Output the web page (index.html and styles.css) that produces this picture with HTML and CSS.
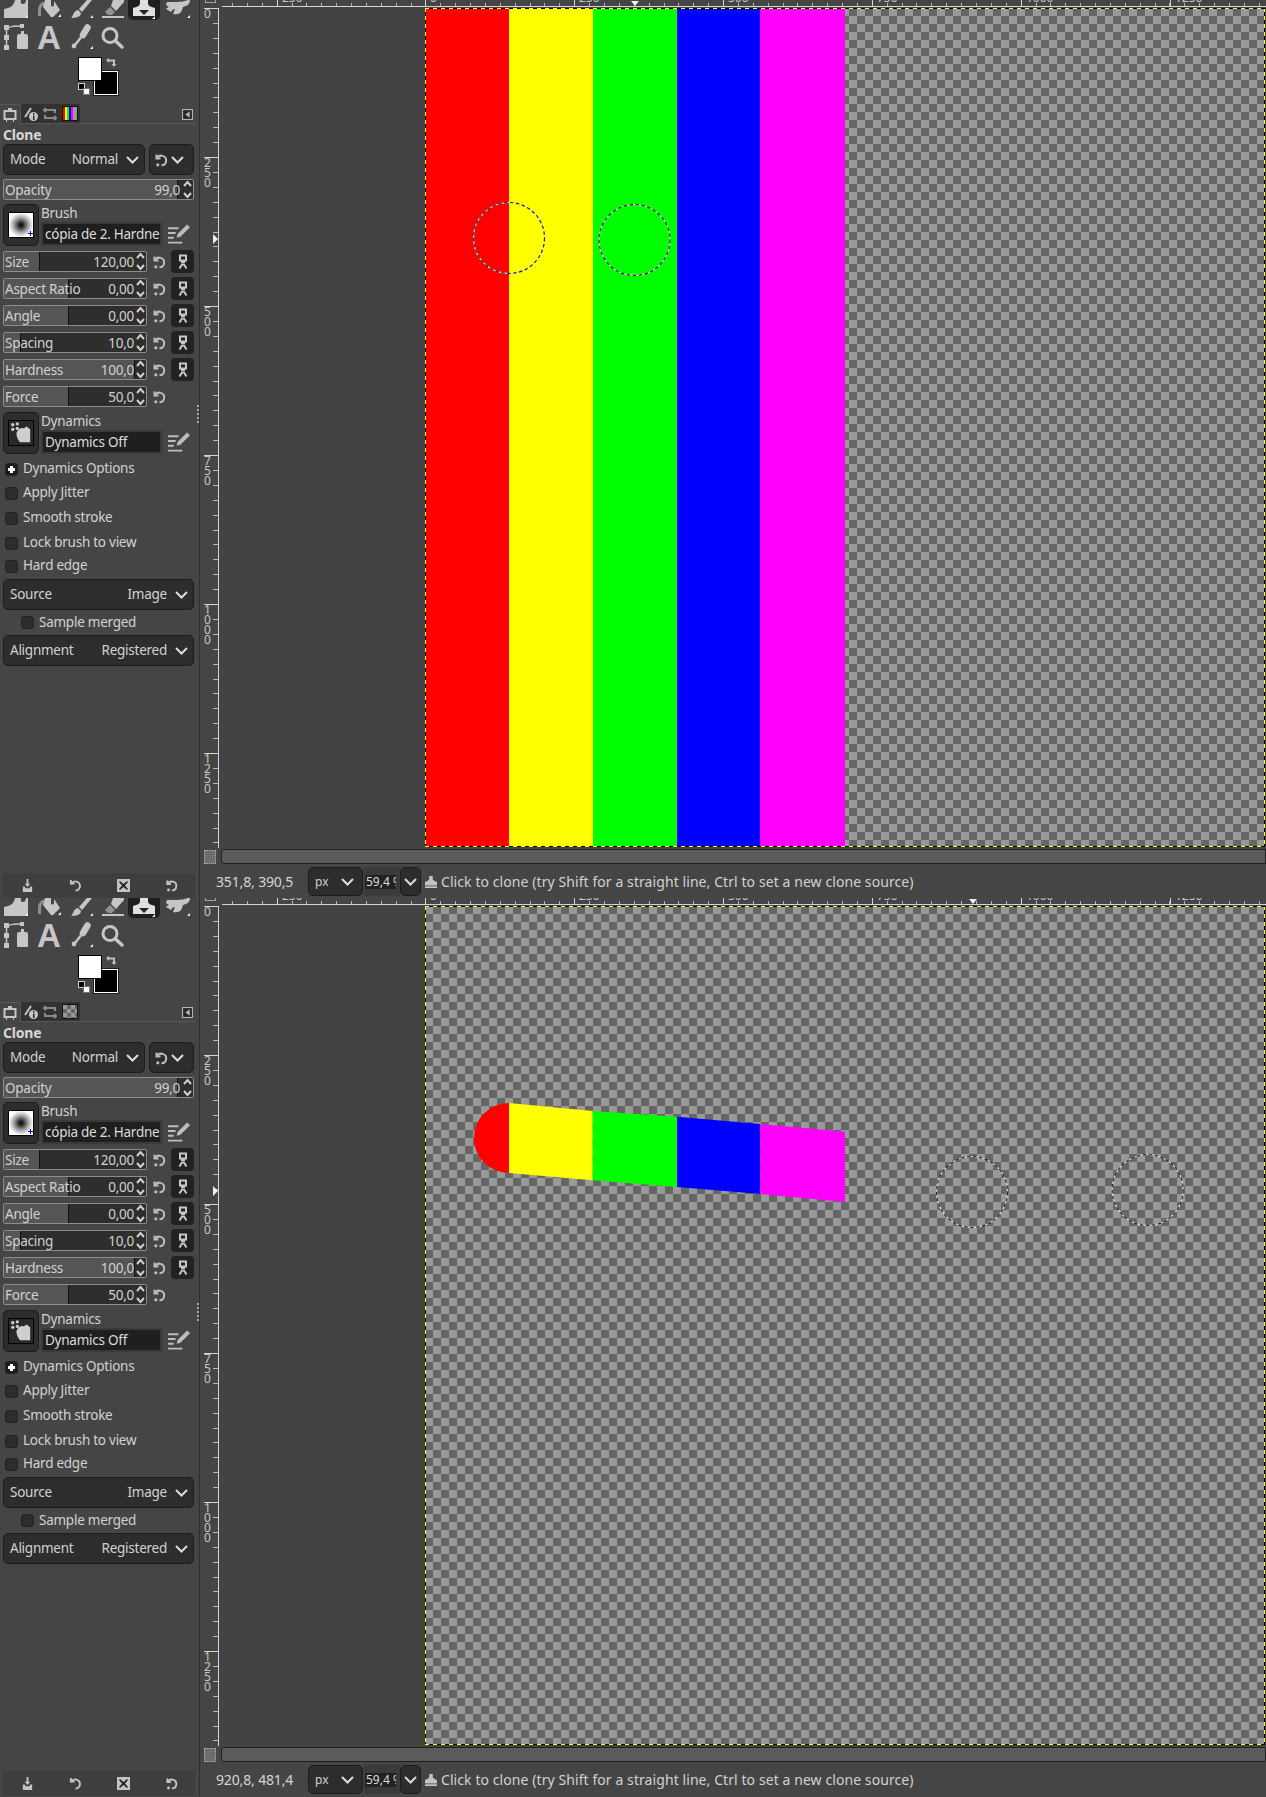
FILE: index.html
```html
<!DOCTYPE html>
<html lang="en">
<head>
<meta charset="utf-8">
<title>GIMP Clone tool</title>
<link rel="stylesheet" href="styles.css">
</head>
<body>
<svg class="defs" aria-hidden="true">
  <symbol id="t-heal" viewBox="0 0 32 20"><path d="M4 18V9c6-1 10-3 11-9h6c-1 2 0 4 2 4s3-2 3-4h2v9 9z"/><path class="tip" d="M25 18h3v-3z"/></symbol>
  <symbol id="t-bucket" viewBox="0 0 32 20"><path class="arc" d="M7.500 16V10c0-3 2-6 5-7"/><path d="M13 0h6v5a1.500 1.500 0 0 0 3 0V1l6 9-7 7h-2L11 7z"/><path class="tip" d="M26 17h3v-3z"/></symbol>
  <symbol id="t-brush" viewBox="0 0 32 20"><path d="M23 0h5L18 12l-3-3z"/><path d="M7 18c2-1 2-7 7-8l3 3c0 4-5 5-10 5z"/><path class="tip" d="M26 18h3v-3z"/></symbol>
  <symbol id="t-eraser" viewBox="0 0 32 20"><path d="M17 0h11v2L20 11l-5-5z"/><path d="M14 7l5 5-3 3h-4l-3-3z" opacity=".6"/><path d="M6 16h22v2H6z"/></symbol>
  <symbol id="t-clone" viewBox="0 0 32 20"><path d="M12 0h8v3c0 3 3 4 7 5v8H5V8c4-1 7-2 7-5z"/><path class="hole" d="M11 10h10l-5 5z"/><path class="tip" d="M24 19h3v-3z"/></symbol>
  <symbol id="t-smudge" viewBox="0 0 32 20"><path d="M7 2h10c4 0 8-1 11-2h2c0 4-3 6-7 7l-1 3c-1 4-5 5-9 4l2-5c-2 0-3 1-4 3L6 9c1-1 2-2 3-2L6 5z"/><path class="tip" d="M27 18h3v-3z"/></symbol>
  <symbol id="t-path" viewBox="0 0 32 32"><path d="M4 3h5v5H4zM4 13h5v5H4zM4 23h5v5H4zM20 2h4v4h-4z"/><path class="line" d="M6.500 6v20M7 7C10 4 14 4 21 4"/><path d="M19 12h2V9h3v3h2a2 2 0 0 1 2 2v12a1 1 0 0 1-1 1h-9a1 1 0 0 1-1-1V14a2 2 0 0 1 2-2z"/></symbol>
  <symbol id="t-picker" viewBox="0 0 32 32"><path class="thin" d="M18 14L11 23"/><path class="bulb" d="M23.500 5.500L19 13"/><circle cx="10" cy="24" r="2.400"/><path class="tip" d="M26 27h3v-3z"/></symbol>
  <symbol id="t-zoom" viewBox="0 0 32 32"><circle class="ring" cx="14" cy="13.500" r="7"/><path class="thick" d="M19.500 19L26 25"/></symbol>
  <symbol id="i-reset" viewBox="0 0 14 14"><path class="line2" d="M2.500 1.500v4h4"/><path class="line2" d="M3 5.500A4.800 4.800 0 1 1 7.500 12.300"/><circle cx="3.800" cy="11.800" r="1.600"/></symbol>
  <symbol id="i-link" viewBox="0 0 10 16"><path class="line2" d="M2 1.500h6v5H2zM4 7v2M6 7v2M1.500 14.500l2.500-4h2l2.500 4"/></symbol>
  <symbol id="i-edit" viewBox="0 0 23 22"><path d="M0 4h11v2H0zM0 9h8v2H0zM0 14h6v2H0zM0 19h15v2H0z"/><path d="M9 15l1-4L20 1l3 3L13 14z"/></symbol>
  <symbol id="i-spin" viewBox="0 0 9 19"><path class="line2" d="M1 6l3.500-4L8 6M1 13l3.500 4L8 13"/></symbol>
  <symbol id="i-chev" viewBox="0 0 13 8"><path class="line2" d="M1 1l5.500 5.500L12 1"/></symbol>
  <symbol id="i-monitor" viewBox="0 0 14 14"><path class="line2" d="M1.500 3h11v8h-11zM5 1h4M3 13h1M10 13h1"/></symbol>
  <symbol id="i-info" viewBox="0 0 14 14"><path class="line2" d="M1 10L7 1"/><circle cx="9.500" cy="9.500" r="4.500"/><path class="hole" d="M9 6h1.500v1.500H9zM9 8.500h1.500V13H9z"/></symbol>
  <symbol id="i-undoredo" viewBox="0 0 14 14"><path class="line2" d="M3 1L1 3l2 2M1 3h11v3M11 9l2 2-2 2M13 11H2V8"/></symbol>
  <symbol id="i-menu" viewBox="0 0 10 10"><path d="M0 0h10v10H0z"/><path class="hole" d="M1 1h8v8H1z"/><path d="M7 2v6L3 5z"/></symbol>
  <symbol id="i-save" viewBox="0 0 12 14"><path d="M5 0h2v5h2L6 8.500 3 5h2zM1 8h2l1 2h4l1-2h2v6H1z"/></symbol>
  <symbol id="i-restore" viewBox="0 0 14 14"><path class="line2" d="M2 1v4h4"/><path class="line2" d="M2.500 5A5 5 0 1 1 7 12.500"/></symbol>
  <symbol id="i-delete" viewBox="0 0 13 13"><path d="M0 0h13v13H0z"/><path class="hole" d="M3 2l3.500 3L10 2l1 1-3 3.500 3 3.500-1 1-3.500-3L3 11l-1-1 3-3.500L2 3z"/></symbol>
  <symbol id="i-dyn" viewBox="0 0 24 24"><circle cx="3" cy="3" r="1.800"/><circle cx="8" cy="2" r="1.800"/><circle cx="3" cy="8" r="1.800"/><circle cx="8" cy="7" r="1.800"/><path d="M7 12c2-5 6-6 8-5l3-2 4 3v14H11c-3-3-4-7-4-10z"/></symbol>
  <symbol id="i-stamp" viewBox="0 0 14 14"><path d="M5 0h4v3c0 2 2 3 5 4v4H0V7c3-1 5-2 5-4z"/><path d="M0 12h14v2H0z"/></symbol>
</svg>

<section class="window">
  <aside class="side">
    <div class="tools">
      <div class="toolrow first">
        <svg class="tool"><use href="#t-heal"/></svg>
        <svg class="tool"><use href="#t-bucket"/></svg>
        <svg class="tool"><use href="#t-brush"/></svg>
        <svg class="tool"><use href="#t-eraser"/></svg>
        <svg class="tool active"><use href="#t-clone"/></svg>
        <svg class="tool"><use href="#t-smudge"/></svg>
      </div>
      <div class="toolrow second">
        <svg class="tool tall"><use href="#t-path"/></svg>
        <span class="tool tall texttool">A</span>
        <svg class="tool tall"><use href="#t-picker"/></svg>
        <svg class="tool tall"><use href="#t-zoom"/></svg>
      </div>
      <div class="colors">
        <span class="bg"></span><span class="fg"></span>
        <span class="mini-b"></span><span class="mini-w"></span>
        <svg class="swap" viewBox="0 0 12 12"><path d="M0 2l3-2v1.500h6V6h1.500L8 9 5.500 6H7V3.500H3V5z"/></svg>
      </div>
    </div>
    <div class="tabs">
      <span class="tab on"><svg class="tabicon"><use href="#i-monitor"/></svg></span>
      <span class="tab"><svg class="tabicon"><use href="#i-info"/></svg></span>
      <span class="tab"><svg class="tabicon dim"><use href="#i-undoredo"/></svg></span>
      <span class="tab"><span class="thumb rainbow"></span></span>
      <svg class="panelmenu"><use href="#i-menu"/></svg>
    </div>
    <div class="panel">
      <h2 class="title">Clone</h2>
      <div class="comborow">
        <div class="combo grow"><span>Mode</span><span class="val">Normal</span><svg class="chev"><use href="#i-chev"/></svg></div>
        <div class="combo small"><svg class="rs"><use href="#i-reset"/></svg><svg class="chev"><use href="#i-chev"/></svg></div>
      </div>
      <div class="spin full opacity"><i class="fill" style="width:92%"></i><span class="lbl">Opacity</span><span class="num">99,0</span><svg class="arrows"><use href="#i-spin"/></svg></div>
      <div class="asset">
        <div class="thumbbtn"><span class="brushprev"></span></div>
        <div class="assetmain"><span class="assetlabel">Brush</span><div class="assetrow"><div class="entry">cópia de 2. Hardness 100</div><svg class="edit"><use href="#i-edit"/></svg></div></div>
      </div>
      <div class="row first-spin"><div class="spin"><i class="fill" style="width:25%"></i><span class="lbl">Size</span><span class="num">120,00</span><svg class="arrows"><use href="#i-spin"/></svg></div><svg class="rs"><use href="#i-reset"/></svg><span class="linkbtn"><svg class="lk"><use href="#i-link"/></svg></span></div>
      <div class="row"><div class="spin"><i class="fill" style="width:46%"></i><span class="lbl">Aspect Ratio</span><span class="num">0,00</span><svg class="arrows"><use href="#i-spin"/></svg></div><svg class="rs"><use href="#i-reset"/></svg><span class="linkbtn"><svg class="lk"><use href="#i-link"/></svg></span></div>
      <div class="row"><div class="spin"><i class="fill" style="width:46%"></i><span class="lbl">Angle</span><span class="num">0,00</span><svg class="arrows"><use href="#i-spin"/></svg></div><svg class="rs"><use href="#i-reset"/></svg><span class="linkbtn"><svg class="lk"><use href="#i-link"/></svg></span></div>
      <div class="row"><div class="spin"><i class="fill" style="width:12%"></i><span class="lbl">Spacing</span><span class="num">10,0</span><svg class="arrows"><use href="#i-spin"/></svg></div><svg class="rs"><use href="#i-reset"/></svg><span class="linkbtn"><svg class="lk"><use href="#i-link"/></svg></span></div>
      <div class="row"><div class="spin"><i class="fill" style="width:92%"></i><span class="lbl">Hardness</span><span class="num">100,0</span><svg class="arrows"><use href="#i-spin"/></svg></div><svg class="rs"><use href="#i-reset"/></svg><span class="linkbtn"><svg class="lk"><use href="#i-link"/></svg></span></div>
      <div class="row"><div class="spin"><i class="fill" style="width:46%"></i><span class="lbl">Force</span><span class="num">50,0</span><svg class="arrows"><use href="#i-spin"/></svg></div><svg class="rs"><use href="#i-reset"/></svg></div>
      <div class="asset dyn">
        <div class="thumbbtn"><span class="dynprev"><svg class="dynicon"><use href="#i-dyn"/></svg></span></div>
        <div class="assetmain"><span class="assetlabel">Dynamics</span><div class="assetrow"><div class="entry">Dynamics Off</div><svg class="edit"><use href="#i-edit"/></svg></div></div>
      </div>
      <ul class="checks">
        <li><span class="box plus"></span>Dynamics Options</li>
        <li><span class="box"></span>Apply Jitter</li>
        <li class="roomy"><span class="box"></span>Smooth stroke</li>
        <li><span class="box"></span>Lock brush to view</li>
        <li class="tight"><span class="box"></span>Hard edge</li>
      </ul>
      <div class="combo wide"><span>Source</span><span class="val">Image</span><svg class="chev"><use href="#i-chev"/></svg></div>
      <div class="sample"><span class="box"></span>Sample merged</div>
      <div class="combo wide"><span>Alignment</span><span class="val">Registered</span><svg class="chev"><use href="#i-chev"/></svg></div>
    </div>
    <div class="actions">
      <svg class="act save"><use href="#i-save"/></svg>
      <svg class="act"><use href="#i-restore"/></svg>
      <svg class="act"><use href="#i-delete"/></svg>
      <svg class="act"><use href="#i-reset"/></svg>
    </div>
    <span class="grip"></span>
  </aside>
  <main class="view">
    <div class="hruler">
      <span class="corner"></span>
      <div class="hticks"></div>
      <span class="hmark" style="left:77px"><b>250</b></span>
      <span class="hmark" style="left:225px"><b>0</b></span>
      <span class="hmark" style="left:374px"><b>250</b></span>
      <span class="hmark" style="left:523px"><b>500</b></span>
      <span class="hmark" style="left:672px"><b>750</b></span>
      <span class="hmark" style="left:821px"><b>1000</b></span>
      <span class="hmark" style="left:970px"><b>1250</b></span>
      <span class="pointer" style="left:431px"></span>
    </div>
    <div class="middle">
      <div class="vruler">
        <span class="vmark" style="top:0"><b>0</b></span>
        <span class="vmark" style="top:149px"><b>250</b></span>
        <span class="vmark" style="top:298px"><b>500</b></span>
        <span class="vmark" style="top:447px"><b>750</b></span>
        <span class="vmark" style="top:596px"><b>1000</b></span>
        <span class="vmark" style="top:745px"><b>1250</b></span>
        <span class="vpointer" style="top:226px"></span>
      </div>
      <div class="canvas">
        <div class="image">
          <div class="strips">
            <span class="s red"></span><span class="s yellow"></span><span class="s green"></span><span class="s blue"></span><span class="s magenta"></span>
          </div>
          <svg class="overlay" viewBox="0 0 840 839">
            <circle class="ant w" cx="84" cy="230" r="35.500"/><circle class="ant k" cx="84" cy="230" r="35.500"/>
            <circle class="ant w" cx="209.500" cy="232" r="35.500"/><circle class="ant k" cx="209.500" cy="232" r="35.500"/>
          </svg>
        </div>
      </div>
    </div>
    <div class="scrollrow"><span class="scorner"></span><span class="scrollbar"></span></div>
    <div class="status">
      <span class="coords">351,8, 390,5</span>
      <div class="unit"><span>px</span><svg class="chev"><use href="#i-chev"/></svg></div>
      <div class="zoomwrap"><span class="zoomentry">59,4 %</span></div>
      <div class="zoomarrow"><svg class="chev"><use href="#i-chev"/></svg></div>
      <svg class="stamp"><use href="#i-stamp"/></svg>
      <span class="msg">Click to clone (try Shift for a straight line, Ctrl to set a new clone source)</span>
    </div>
  </main>
</section>

<section class="window">
  <aside class="side">
    <div class="tools">
      <div class="toolrow first">
        <svg class="tool"><use href="#t-heal"/></svg>
        <svg class="tool"><use href="#t-bucket"/></svg>
        <svg class="tool"><use href="#t-brush"/></svg>
        <svg class="tool"><use href="#t-eraser"/></svg>
        <svg class="tool active"><use href="#t-clone"/></svg>
        <svg class="tool"><use href="#t-smudge"/></svg>
      </div>
      <div class="toolrow second">
        <svg class="tool tall"><use href="#t-path"/></svg>
        <span class="tool tall texttool">A</span>
        <svg class="tool tall"><use href="#t-picker"/></svg>
        <svg class="tool tall"><use href="#t-zoom"/></svg>
      </div>
      <div class="colors">
        <span class="bg"></span><span class="fg"></span>
        <span class="mini-b"></span><span class="mini-w"></span>
        <svg class="swap" viewBox="0 0 12 12"><path d="M0 2l3-2v1.500h6V6h1.500L8 9 5.500 6H7V3.500H3V5z"/></svg>
      </div>
    </div>
    <div class="tabs">
      <span class="tab on"><svg class="tabicon"><use href="#i-monitor"/></svg></span>
      <span class="tab"><svg class="tabicon"><use href="#i-info"/></svg></span>
      <span class="tab"><svg class="tabicon dim"><use href="#i-undoredo"/></svg></span>
      <span class="tab"><span class="thumb checker"></span></span>
      <svg class="panelmenu"><use href="#i-menu"/></svg>
    </div>
    <div class="panel">
      <h2 class="title">Clone</h2>
      <div class="comborow">
        <div class="combo grow"><span>Mode</span><span class="val">Normal</span><svg class="chev"><use href="#i-chev"/></svg></div>
        <div class="combo small"><svg class="rs"><use href="#i-reset"/></svg><svg class="chev"><use href="#i-chev"/></svg></div>
      </div>
      <div class="spin full opacity"><i class="fill" style="width:92%"></i><span class="lbl">Opacity</span><span class="num">99,0</span><svg class="arrows"><use href="#i-spin"/></svg></div>
      <div class="asset">
        <div class="thumbbtn"><span class="brushprev"></span></div>
        <div class="assetmain"><span class="assetlabel">Brush</span><div class="assetrow"><div class="entry">cópia de 2. Hardness 100</div><svg class="edit"><use href="#i-edit"/></svg></div></div>
      </div>
      <div class="row first-spin"><div class="spin"><i class="fill" style="width:25%"></i><span class="lbl">Size</span><span class="num">120,00</span><svg class="arrows"><use href="#i-spin"/></svg></div><svg class="rs"><use href="#i-reset"/></svg><span class="linkbtn"><svg class="lk"><use href="#i-link"/></svg></span></div>
      <div class="row"><div class="spin"><i class="fill" style="width:46%"></i><span class="lbl">Aspect Ratio</span><span class="num">0,00</span><svg class="arrows"><use href="#i-spin"/></svg></div><svg class="rs"><use href="#i-reset"/></svg><span class="linkbtn"><svg class="lk"><use href="#i-link"/></svg></span></div>
      <div class="row"><div class="spin"><i class="fill" style="width:46%"></i><span class="lbl">Angle</span><span class="num">0,00</span><svg class="arrows"><use href="#i-spin"/></svg></div><svg class="rs"><use href="#i-reset"/></svg><span class="linkbtn"><svg class="lk"><use href="#i-link"/></svg></span></div>
      <div class="row"><div class="spin"><i class="fill" style="width:12%"></i><span class="lbl">Spacing</span><span class="num">10,0</span><svg class="arrows"><use href="#i-spin"/></svg></div><svg class="rs"><use href="#i-reset"/></svg><span class="linkbtn"><svg class="lk"><use href="#i-link"/></svg></span></div>
      <div class="row"><div class="spin"><i class="fill" style="width:92%"></i><span class="lbl">Hardness</span><span class="num">100,0</span><svg class="arrows"><use href="#i-spin"/></svg></div><svg class="rs"><use href="#i-reset"/></svg><span class="linkbtn"><svg class="lk"><use href="#i-link"/></svg></span></div>
      <div class="row"><div class="spin"><i class="fill" style="width:46%"></i><span class="lbl">Force</span><span class="num">50,0</span><svg class="arrows"><use href="#i-spin"/></svg></div><svg class="rs"><use href="#i-reset"/></svg></div>
      <div class="asset dyn">
        <div class="thumbbtn"><span class="dynprev"><svg class="dynicon"><use href="#i-dyn"/></svg></span></div>
        <div class="assetmain"><span class="assetlabel">Dynamics</span><div class="assetrow"><div class="entry">Dynamics Off</div><svg class="edit"><use href="#i-edit"/></svg></div></div>
      </div>
      <ul class="checks">
        <li><span class="box plus"></span>Dynamics Options</li>
        <li><span class="box"></span>Apply Jitter</li>
        <li class="roomy"><span class="box"></span>Smooth stroke</li>
        <li><span class="box"></span>Lock brush to view</li>
        <li class="tight"><span class="box"></span>Hard edge</li>
      </ul>
      <div class="combo wide"><span>Source</span><span class="val">Image</span><svg class="chev"><use href="#i-chev"/></svg></div>
      <div class="sample"><span class="box"></span>Sample merged</div>
      <div class="combo wide"><span>Alignment</span><span class="val">Registered</span><svg class="chev"><use href="#i-chev"/></svg></div>
    </div>
    <div class="actions">
      <svg class="act save"><use href="#i-save"/></svg>
      <svg class="act"><use href="#i-restore"/></svg>
      <svg class="act"><use href="#i-delete"/></svg>
      <svg class="act"><use href="#i-reset"/></svg>
    </div>
    <span class="grip"></span>
  </aside>
  <main class="view">
    <div class="hruler">
      <span class="corner"></span>
      <div class="hticks"></div>
      <span class="hmark" style="left:77px"><b>250</b></span>
      <span class="hmark" style="left:225px"><b>0</b></span>
      <span class="hmark" style="left:374px"><b>250</b></span>
      <span class="hmark" style="left:523px"><b>500</b></span>
      <span class="hmark" style="left:672px"><b>750</b></span>
      <span class="hmark" style="left:821px"><b>1000</b></span>
      <span class="hmark" style="left:970px"><b>1250</b></span>
      <span class="pointer" style="left:769px"></span>
    </div>
    <div class="middle">
      <div class="vruler">
        <span class="vmark" style="top:0"><b>0</b></span>
        <span class="vmark" style="top:149px"><b>250</b></span>
        <span class="vmark" style="top:298px"><b>500</b></span>
        <span class="vmark" style="top:447px"><b>750</b></span>
        <span class="vmark" style="top:596px"><b>1000</b></span>
        <span class="vmark" style="top:745px"><b>1250</b></span>
        <span class="vpointer" style="top:280px"></span>
      </div>
      <div class="canvas">
        <div class="image">
          <svg class="overlay" viewBox="0 0 840 839">
            <path class="red-f" d="M84 197A35 35 0 0 0 84 267z"/>
            <path class="yel-f" d="M84 197L167.700 205V274.300L84 267z"/>
            <path class="grn-f" d="M167.700 205L252 210.700V281L167.700 274.300z"/>
            <path class="blu-f" d="M252 210.700L335.300 218V288L252 281z"/>
            <path class="mag-f" d="M335.300 218L420 225.700V296L335.300 288z"/>
            <circle class="ant w" cx="547" cy="286" r="35.500"/><circle class="ant k" cx="547" cy="286" r="35.500"/>
            <circle class="ant w" cx="722.700" cy="284" r="35.500"/><circle class="ant k" cx="722.700" cy="284" r="35.500"/>
          </svg>
        </div>
      </div>
    </div>
    <div class="scrollrow"><span class="scorner"></span><span class="scrollbar"></span></div>
    <div class="status">
      <span class="coords">920,8, 481,4</span>
      <div class="unit"><span>px</span><svg class="chev"><use href="#i-chev"/></svg></div>
      <div class="zoomwrap"><span class="zoomentry">59,4 %</span></div>
      <div class="zoomarrow"><svg class="chev"><use href="#i-chev"/></svg></div>
      <svg class="stamp"><use href="#i-stamp"/></svg>
      <span class="msg">Click to clone (try Shift for a straight line, Ctrl to set a new clone source)</span>
    </div>
  </main>
</section>
</body>
</html>
```
FILE: styles.css
```css
* { box-sizing: border-box; }
html, body { margin: 0; padding: 0; }
body {
  background: #454545;
  color: #d2d2d2;
  font-family: "Noto Sans", "Open Sans", sans-serif;
  font-size: 14px;
  line-height: 1;
  overflow: hidden;
}
.defs { position: absolute; width: 0; height: 0; }
.tip { fill: #eee; }
.hole { fill: #262626; }
.line { fill: none; stroke: currentColor; stroke-width: 1.5; }
.line2 { fill: none; stroke: currentColor; stroke-width: 2; }
.thick { fill: none; stroke: currentColor; stroke-width: 3.500; stroke-linecap: round; }
.thin { fill: none; stroke: #c6c6c6; stroke-width: 2.500; }
.bulb { fill: none; stroke: #c6c6c6; stroke-width: 6.500; stroke-linecap: round; }
.arc { fill: none; stroke: #8e8e8e; stroke-width: 3; }
.ring { fill: none; stroke: currentColor; stroke-width: 3; }

.window { display: flex; height: 898px; width: 1266px; overflow: hidden; }

/* sidebar */
.side { position: relative; width: 200px; flex: none; display: flex; flex-direction: column; border-right: 1px solid #2f2f2f; background: #454545; font-size: 13.500px; letter-spacing: -0.250px; }
.tools { height: 104px; flex: none; }
.toolrow { display: flex; }
.toolrow.first { height: 22px; }
.toolrow.second { height: 32px; }
.tool { display: block; width: 32px; height: 20px; fill: #c6c6c6; color: #c6c6c6; flex: none; }
.tool.tall { height: 32px; }
.tool.active { background: #1f1f1f; border-radius: 0 0 5px 5px; fill: #e0e0e0; }
.texttool { font-family: "Liberation Sans", sans-serif; font-weight: 700; font-size: 33px; letter-spacing: 0; line-height: 32px; text-align: center; padding: 0 5px; }

.colors { position: relative; height: 50px; }
.fg, .bg { position: absolute; display: block; }
.fg { left: 78px; top: 3px; width: 24px; height: 24px; background: #fff; border: 1px solid #000; }
.bg { left: 94px; top: 17px; width: 24px; height: 24px; background: #000; border: 1px solid #fff; outline: 1px solid #1c1c1c; }
.mini-b, .mini-w { position: absolute; display: block; width: 7px; height: 7px; }
.mini-b { left: 78px; top: 29px; background: #000; border: 1px solid #ccc; }
.mini-w { left: 83px; top: 34px; background: #fff; border: 1px solid #777; }
.swap { position: absolute; left: 106px; top: 4px; width: 12px; height: 12px; fill: #bdbdbd; }

.tabs { position: relative; height: 20px; flex: none; display: flex; }
.tab { width: 19.500px; height: 20px; background: #323232; display: flex; align-items: center; justify-content: center; border-bottom: 1px solid #565656; }
.tab.on { width: 21px; background: #454545; border: 1px solid #565656; border-bottom: 0; border-left: 0; }
.tabicon { width: 14px; height: 14px; color: #c6c6c6; fill: #c6c6c6; }
.tabicon.dim { color: #8a8a8a; fill: #8a8a8a; }
.thumb { display: block; width: 16px; height: 15px; border: 1px solid #111; }
.thumb.rainbow { background: linear-gradient(90deg, #f00 0 15%, #ff0 15% 30%, #0f0 30% 45%, #00f 45% 58%, #f0f 58% 70%, #999 70%); }
.thumb.checker { background: repeating-conic-gradient(#666 0 25%, #999 0 50%) 0 0 / 8px 8px; }
.panelmenu { position: absolute; left: 182px; top: 5px; width: 11px; height: 11px; fill: #b4b4b4; }
.tabs::after { content: ""; flex: 1; margin-right: 3px; border-bottom: 1px solid #565656; }

.panel { height: 749px; flex: none; margin-left: 3px; width: 192px; }
.title { margin: 0; height: 20px; font-size: 14px; font-weight: 700; letter-spacing: -0.200px; color: #d8d8d8; line-height: 22px; }

.combo { display: flex; align-items: center; height: 31px; background: #2d2d2d; border: 1px solid #1c1c1c; border-radius: 5px; padding: 0 5px 0 6px; }
.combo .val { margin-left: auto; }
.comborow { display: flex; gap: 4px; }
.combo.grow { width: 142px; }
.combo.small { width: 45px; padding: 0 6px 0 4px; justify-content: space-between; }
.combo.wide { width: 191px; }
.chev { width: 13px; height: 8px; color: #dcdcdc; margin-left: 8px; flex: none; }
.rs { width: 14px; height: 14px; color: #bdbdbd; fill: #bdbdbd; flex: none; }
.combo.small .chev { margin: 0 3px 0 0; }

.spin { position: relative; width: 144px; height: 21px; background: #2e2e2e; border: 1px solid #8d8d8d; border-radius: 2px; overflow: hidden; flex: none; }
.spin.full { width: 191px; margin-top: 4px; }
.fill { position: absolute; left: 0; top: 0; bottom: 0; background: #555; border-right: 1px solid #101010; }
.lbl { position: absolute; left: 1px; top: 2px; line-height: 16px; white-space: nowrap; }
.num { position: absolute; right: 12px; top: 2px; line-height: 16px; }
.spin.opacity .num { right: 13px; }
.arrows { position: absolute; right: 1px; top: 0; width: 9px; height: 19px; color: #d0d0d0; }

.asset { display: flex; height: 42px; margin-top: 4px; gap: 2px; }
.asset.dyn { margin-top: 5px; }
.thumbbtn { width: 36px; height: 42px; background: #2d2d2d; border: 1px solid #1c1c1c; border-radius: 5px; flex: none; display: flex; align-items: center; justify-content: center; }
.brushprev { position: relative; display: block; width: 26px; height: 26px; background: radial-gradient(circle, #000 0, #333 15%, #aaa 45%, #fff 72%); border: 1px solid #000; }
.brushprev::after { content: ""; position: absolute; right: 0; bottom: 1px; width: 5px; height: 5px; background: linear-gradient(#00f, #00f) center / 5px 1px no-repeat, linear-gradient(#00f, #00f) center / 1px 5px no-repeat; }
.dynprev { display: block; width: 26px; height: 26px; background: #2a2a2a; border: 1px solid #000; padding: 1px; }
.dynicon { display: block; width: 22px; height: 22px; fill: #cfcfcf; }
.assetmain { flex: 1; min-width: 0; }
.assetlabel { display: block; height: 18px; line-height: 18px; }
.assetrow { display: flex; align-items: center; }
.entry { width: 121px; height: 24px; background: #1f1f1f; border: 2px solid #3a3a3a; color: #dcdcdc; padding-left: 2px; line-height: 20px; white-space: nowrap; overflow: hidden; flex: none; }
.edit { width: 22px; height: 22px; margin-left: 6px; fill: #bdbdbd; flex: none; }

.row { display: flex; align-items: center; height: 21px; margin-top: 6px; }
.row.first-spin { margin-top: 5px; }
.row .rs { margin-left: 5px; }
.linkbtn { width: 23px; height: 23px; margin-left: 5px; background: #222; border-radius: 4px; display: flex; align-items: center; justify-content: center; flex: none; }
.lk { width: 10px; height: 16px; color: #c8c8c8; }

.checks { list-style: none; margin: 3px 0 2px; padding: 0; }
.checks li { display: flex; align-items: center; height: 24px; padding-left: 2px; gap: 5px; }
.checks li.roomy { height: 26px; }
.checks li.tight { height: 22px; }
.box { display: block; width: 13px; height: 13px; background: #2d2d2d; border: 1px solid #222; border-radius: 3px; flex: none; }
.box.plus { background: linear-gradient(#fff, #fff) center / 7px 3px no-repeat, linear-gradient(#fff, #fff) center / 3px 7px no-repeat, #1d1d1d; }
.sample { display: flex; align-items: center; height: 25px; padding-left: 18px; gap: 5px; }

.actions { height: 25px; flex: none; width: 192px; margin-left: 3px; background: #3e3e3e; display: grid; grid-template-columns: repeat(4, 48px); align-items: center; justify-items: center; }
.act { width: 13px; height: 13px; color: #c4c4c4; fill: #c4c4c4; }
.grip { position: absolute; left: 197px; top: 405px; width: 2px; height: 18px; background: repeating-linear-gradient(#aaa 0 2px, transparent 2px 4px); }

/* canvas side */
.view { flex: 1; min-width: 0; display: flex; flex-direction: column; }
.hruler { position: relative; height: 8px; overflow: hidden; flex: none; }
.corner { position: absolute; left: 5px; top: -6px; width: 11px; height: 9px; border: 1px solid #a8a8a8; }
.hticks { position: absolute; left: 22px; right: 0; top: 0; height: 7px; border-bottom: 1px solid #d4d4d4; background: repeating-linear-gradient(90deg, #b8b8b8 10px, #b8b8b8 11px, transparent 11px, transparent 24.880px) 0 3px / 100% 3px no-repeat; }
.hmark { position: absolute; top: 0; height: 7px; border-left: 1px solid #d4d4d4; }
.hmark b { position: absolute; left: 4px; top: -8px; font-weight: 400; font-size: 12px; line-height: 12px; color: #c8c8c8; }
.pointer { position: absolute; top: 1px; width: 0; height: 0; border: 4px solid transparent; border-bottom: 0; border-top: 5px solid #eee; }

.middle { display: flex; height: 840px; flex: none; }
.vruler { position: relative; width: 19px; flex: none; overflow: hidden; border-right: 1px solid #d4d4d4; background: repeating-linear-gradient(#b8b8b8 0, #b8b8b8 1px, transparent 1px, transparent 14.900px) right 0 top 0 / 5px 100% no-repeat; }
.vmark { position: absolute; left: 4px; right: 0; height: 1px; border-top: 1px solid #d4d4d4; }
.vmark b { position: absolute; left: 0; top: 0; width: 1ch; word-break: break-all; font-weight: 400; font-size: 12px; line-height: 10px; letter-spacing: 0; color: #c8c8c8; }
.vpointer { position: absolute; right: 0; width: 0; height: 0; border: 5px solid transparent; border-right: 0; border-left: 5px solid #eee; }

.canvas { flex: 1; min-width: 0; padding-left: 206px; background: #434343; overflow: hidden; }
.image { position: relative; width: 840px; height: 839px; background: repeating-conic-gradient(#666 0 25%, #999 0 50%) 0 0 / 16px 16px; }
.image::after { content: ""; position: absolute; inset: 0; background:
  repeating-linear-gradient(90deg, #ff0 0 4px, #000 4px 8px) 0 0 / 100% 1px no-repeat,
  repeating-linear-gradient(90deg, #ff0 0 4px, #000 4px 8px) 0 100% / 100% 1px no-repeat,
  repeating-linear-gradient(#ff0 0 4px, #000 4px 8px) 0 0 / 1px 100% no-repeat,
  repeating-linear-gradient(#ff0 0 4px, #000 4px 8px) 100% 0 / 1px 100% no-repeat; }
.strips { display: flex; height: 100%; width: 420px; }
.s { display: block; height: 100%; flex: none; }
.red { width: 84px; background: #f00; }
.yellow { width: 83.500px; background: #ff0; }
.green { width: 84.500px; background: #0f0; }
.blue { width: 83px; background: #00f; }
.magenta { width: 85px; background: #f0f; }
.overlay { position: absolute; left: 0; top: 0; width: 840px; height: 839px; }
.red-f { fill: #f00; } .yel-f { fill: #ff0; } .grn-f { fill: #0f0; } .blu-f { fill: #00f; } .mag-f { fill: #f0f; }
.ant { fill: none; stroke-width: 1.200; }
.ant.w { stroke: #e2e2e2; }
.ant.k { stroke: #2a2a2a; stroke-dasharray: 3.500 2.500; }

.scrollrow { height: 17px; flex: none; display: flex; align-items: center; padding-left: 4px; gap: 5px; }
.scorner { width: 12px; height: 14px; background: #6e6e6e; border: 1px dotted #b0b0b0; flex: none; }
.scrollbar { flex: 1; height: 15px; background: #5b5b5b; border: 1px solid #202020; border-radius: 3px 0 0 3px; }

.status { height: 33px; flex: none; display: flex; align-items: center; padding: 0 0 0 16px; white-space: nowrap; }
.coords { width: 92px; flex: none; color: #d6d6d6; letter-spacing: -0.150px; }
.unit { width: 55px; height: 29px; background: #2d2d2d; border: 1px solid #1c1c1c; border-radius: 5px; display: flex; align-items: center; padding: 0 8px 0 6px; justify-content: space-between; font-size: 12px; flex: none; }
.unit .chev { margin: 0; }
.zoomwrap { width: 36px; height: 29px; background: #3b3b3b; flex: none; margin-left: 1px; padding: 8px 1px; display: flex; }
.zoomentry { display: block; width: 31px; height: 14px; background: #222; font-size: 12px; line-height: 14px; overflow: hidden; white-space: nowrap; padding-left: 1px; color: #dcdcdc; }
.zoomarrow { width: 21px; height: 29px; background: #2d2d2d; border: 1px solid #1c1c1c; border-radius: 5px; display: flex; align-items: center; justify-content: center; flex: none; }
.zoomarrow .chev { margin: 0; }
.stamp { width: 12px; height: 14px; margin-left: 4px; fill: #c4c4c4; flex: none; }
.msg { margin-left: 4px; letter-spacing: 0.080px; }
```
